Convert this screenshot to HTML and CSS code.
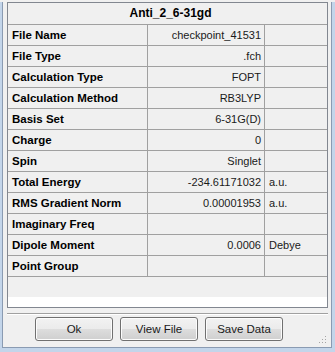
FILE: index.html
```html
<!DOCTYPE html>
<html lang="en">
<head>
  <meta charset="UTF-8">
  <title>Anti_2_6-31gd</title>
  <link rel="stylesheet" href="styles.css">
</head>
<body>

<div class="frame">
  <div class="panel">

    <div class="summary">
      <div class="title">Anti_2_6-31gd</div>

      <div class="row"><div class="label">File Name</div><div class="value">checkpoint_41531</div><div class="unit"></div></div>
      <div class="row"><div class="label">File Type</div><div class="value">.fch</div><div class="unit"></div></div>
      <div class="row"><div class="label">Calculation Type</div><div class="value">FOPT</div><div class="unit"></div></div>
      <div class="row"><div class="label">Calculation Method</div><div class="value">RB3LYP</div><div class="unit"></div></div>
      <div class="row"><div class="label">Basis Set</div><div class="value">6-31G(D)</div><div class="unit"></div></div>
      <div class="row"><div class="label">Charge</div><div class="value">0</div><div class="unit"></div></div>
      <div class="row"><div class="label">Spin</div><div class="value">Singlet</div><div class="unit"></div></div>
      <div class="row"><div class="label">Total Energy</div><div class="value">-234.61171032</div><div class="unit">a.u.</div></div>
      <div class="row"><div class="label">RMS Gradient Norm</div><div class="value">0.00001953</div><div class="unit">a.u.</div></div>
      <div class="row"><div class="label">Imaginary Freq</div><div class="value"></div><div class="unit"></div></div>
      <div class="row"><div class="label">Dipole Moment</div><div class="value">0.0006</div><div class="unit">Debye</div></div>
      <div class="row"><div class="label">Point Group</div><div class="value"></div><div class="unit"></div></div>

      <div class="filler"></div>
      <div class="blank"></div>
    </div>

    <div class="separator"></div>

    <div class="actions">
      <button class="btn">Ok</button>
      <button class="btn">View File</button>
      <button class="btn">Save Data</button>
      <svg class="grip" width="9" height="9" viewBox="0 0 9 9">
        <rect x="7" y="1" width="1" height="1" fill="#a5a5a5"/>
        <rect x="4" y="4" width="1" height="1" fill="#a5a5a5"/>
        <rect x="7" y="4" width="1" height="1" fill="#a5a5a5"/>
        <rect x="1" y="7" width="1" height="1" fill="#a5a5a5"/>
        <rect x="4" y="7" width="1" height="1" fill="#a5a5a5"/>
        <rect x="7" y="7" width="1" height="1" fill="#a5a5a5"/>
      </svg>
    </div>

  </div>
</div>

</body>
</html>
```

FILE: styles.css
```css
html, body {
  margin: 0;
  padding: 0;
  background-color: #f0f0f0;
}
body {
  font-family: "Liberation Sans", Arial, sans-serif;
  font-size: 11px;
  color: #000;
}
.frame {
  width: 335px;
  height: 352px;
  box-sizing: border-box;
  border-left: 2px solid #c3d5ea;
  border-right: 3px solid #c3d5ea;
  border-bottom: 6px solid #c3d5ea;
}
.panel {
  height: 100%;
  box-sizing: border-box;
  border-left: 1px solid #8a9bb2;
  border-right: 1px solid #8a9bb2;
  border-bottom: 1px solid #8a9bb2;
  background-color: #f0f0f0;
}
.summary {
  margin: 2px 3px 0 4px;
  border: 1px solid #828790;
  background-color: #f0f0f0;
}
.title {
  height: 21px;
  line-height: 21px;
  border-bottom: 1px solid #a0a0a0;
  text-align: center;
  font-weight: bold;
  font-size: 12px;
  padding-left: 6px;
}
.row {
  display: grid;
  grid-template-columns: 140px 117px 1fr;
  height: 20px;
  line-height: 20px;
  border-bottom: 1px solid #a0a0a0;
}
.label {
  padding-left: 4px;
  font-weight: bold;
  font-size: 11.5px;
  border-right: 1px solid #a0a0a0;
  white-space: nowrap;
}
.value {
  padding-right: 3px;
  text-align: right;
  border-right: 1px solid #a0a0a0;
  white-space: nowrap;
  color: #1a1a1a;
}
.unit {
  padding-left: 4px;
  white-space: nowrap;
  color: #1a1a1a;
}
.filler {
  height: 20px;
}
.blank {
  height: 10px;
  background-color: #fff;
}
.separator {
  margin: 5px 3px 0 4px;
  border-top: 1px solid #a0a0a0;
  border-bottom: 1px solid #fff;
  height: 0;
}
.actions {
  display: flex;
  gap: 7px;
  margin-top: 2px;
  padding-left: 32px;
  padding-right: 4px;
}
.btn {
  width: 78px;
  height: 24px;
  padding: 0;
  border: 1px solid #707070;
  border-radius: 3px;
  background: linear-gradient(#f2f2f2 0%, #ebebeb 50%, #dddddd 51%, #cfcfcf 100%);
  font-family: "Liberation Sans", Arial, sans-serif;
  font-size: 11.5px;
  color: #1a1a1a;
  box-shadow: inset 0 0 0 1px #fcfcfc;
}
.grip {
  margin-left: auto;
  align-self: flex-end;
  margin-bottom: -3px;
}
```
